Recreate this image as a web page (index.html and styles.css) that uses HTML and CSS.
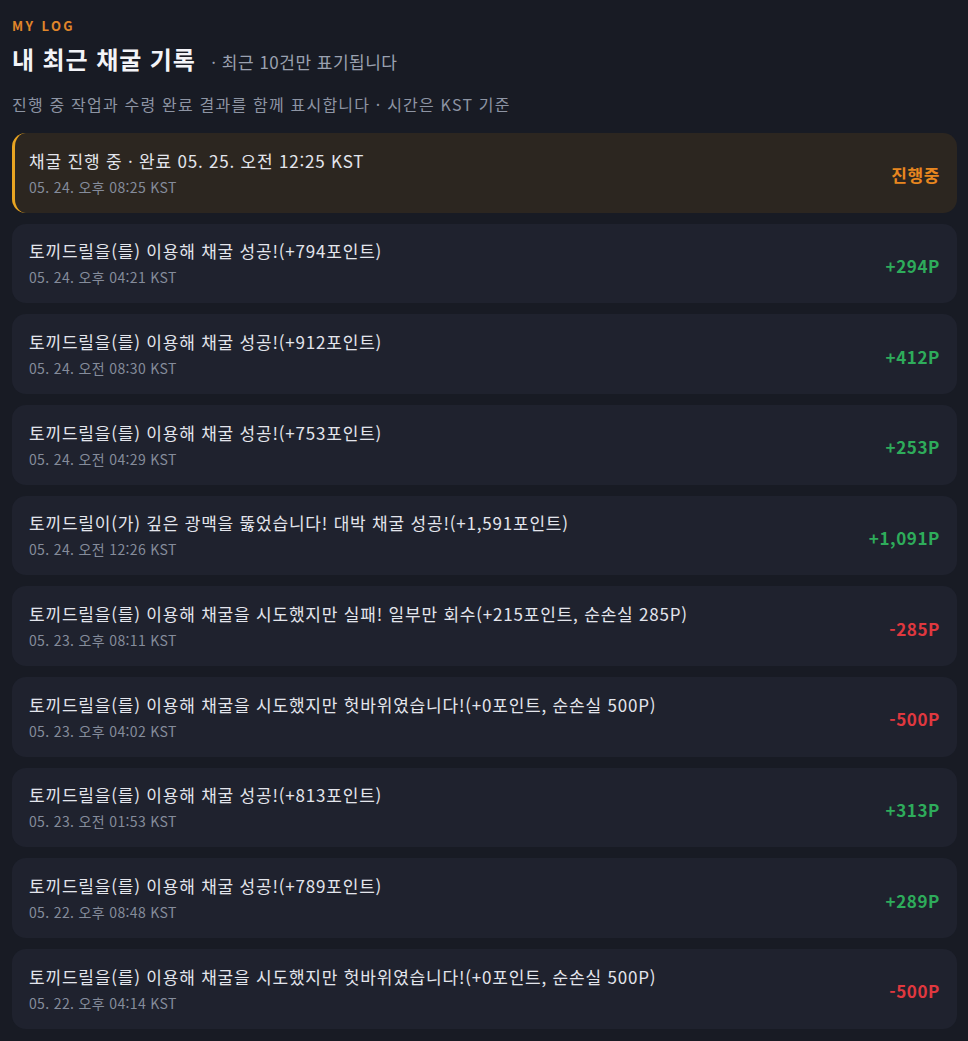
FILE: index.html
```html
<!DOCTYPE html>
<html lang="ko">
<head>
  <meta charset="UTF-8">
  <meta name="viewport" content="width=device-width, initial-scale=1.0">
  <title>My Log</title>
  <link rel="stylesheet" href="styles.css">
</head>
<body>
  <section class="log">
    <div class="eyebrow">MY LOG</div>
    <h1>내 최근 채굴 기록 <span class="sub">· 최근 10건만 표기됩니다</span></h1>
    <p class="desc">진행 중 작업과 수령 완료 결과를 함께 표시합니다 · 시간은 KST 기준</p>

    <ul class="list">
      <li class="item pending">
        <div class="info">
          <div class="title">채굴 진행 중 · 완료 05. 25. 오전 12:25 KST</div>
          <div class="time">05. 24. 오후 08:25 KST</div>
        </div>
        <div class="value wait">진행중</div>
      </li>
      <li class="item">
        <div class="info">
          <div class="title">토끼드릴을(를) 이용해 채굴 성공!(+794포인트)</div>
          <div class="time">05. 24. 오후 04:21 KST</div>
        </div>
        <div class="value plus">+294P</div>
      </li>
      <li class="item">
        <div class="info">
          <div class="title">토끼드릴을(를) 이용해 채굴 성공!(+912포인트)</div>
          <div class="time">05. 24. 오전 08:30 KST</div>
        </div>
        <div class="value plus">+412P</div>
      </li>
      <li class="item">
        <div class="info">
          <div class="title">토끼드릴을(를) 이용해 채굴 성공!(+753포인트)</div>
          <div class="time">05. 24. 오전 04:29 KST</div>
        </div>
        <div class="value plus">+253P</div>
      </li>
      <li class="item">
        <div class="info">
          <div class="title">토끼드릴이(가) 깊은 광맥을 뚫었습니다! 대박 채굴 성공!(+1,591포인트)</div>
          <div class="time">05. 24. 오전 12:26 KST</div>
        </div>
        <div class="value plus">+1,091P</div>
      </li>
      <li class="item">
        <div class="info">
          <div class="title">토끼드릴을(를) 이용해 채굴을 시도했지만 실패! 일부만 회수(+215포인트, 순손실 285P)</div>
          <div class="time">05. 23. 오후 08:11 KST</div>
        </div>
        <div class="value minus">-285P</div>
      </li>
      <li class="item">
        <div class="info">
          <div class="title">토끼드릴을(를) 이용해 채굴을 시도했지만 헛바위였습니다!(+0포인트, 순손실 500P)</div>
          <div class="time">05. 23. 오후 04:02 KST</div>
        </div>
        <div class="value minus">-500P</div>
      </li>
      <li class="item">
        <div class="info">
          <div class="title">토끼드릴을(를) 이용해 채굴 성공!(+813포인트)</div>
          <div class="time">05. 23. 오전 01:53 KST</div>
        </div>
        <div class="value plus">+313P</div>
      </li>
      <li class="item">
        <div class="info">
          <div class="title">토끼드릴을(를) 이용해 채굴 성공!(+789포인트)</div>
          <div class="time">05. 22. 오후 08:48 KST</div>
        </div>
        <div class="value plus">+289P</div>
      </li>
      <li class="item">
        <div class="info">
          <div class="title">토끼드릴을(를) 이용해 채굴을 시도했지만 헛바위였습니다!(+0포인트, 순손실 500P)</div>
          <div class="time">05. 22. 오후 04:14 KST</div>
        </div>
        <div class="value minus">-500P</div>
      </li>
    </ul>
  </section>
</body>
</html>
```

FILE: styles.css
```css
* {
  margin: 0;
  padding: 0;
  box-sizing: border-box;
}
body {
  font-family: "Noto Sans CJK KR", "Noto Sans", sans-serif;
  background: #181b24;
  color: #e6e8ee;
  overflow: hidden;
}
.log {
  padding: 16px 11px 12px 12px;
}
.eyebrow {
  color: #e0862a;
  font-size: 13px;
  font-weight: 700;
  letter-spacing: 2.4px;
  line-height: 20px;
}
h1 {
  margin-top: 7px;
  font-size: 24px;
  font-weight: 700;
  line-height: 32px;
  letter-spacing: 0.9px;
  color: #f3f4f8;
}
h1 .sub {
  margin-left: 8px;
  font-size: 17px;
  font-weight: 400;
  letter-spacing: 0.5px;
  color: #9aa1b0;
}
.desc {
  margin-top: 14px;
  font-size: 16px;
  line-height: 24px;
  letter-spacing: 1.2px;
  color: #8d94a3;
}
.list {
  list-style: none;
  margin-top: 17px;
  display: flex;
  flex-direction: column;
  gap: 11px;
}
.item {
  display: flex;
  align-items: center;
  justify-content: space-between;
  height: 79.67px;
  padding: 0 17px;
  background: #1f222e;
  border-radius: 14px;
}
.item.pending {
  background: #2c2620;
  border-left: 3px solid #e8a422;
  padding-left: 14px;
}
.title {
  font-size: 17px;
  line-height: 24px;
  letter-spacing: 0.8px;
  color: #e3e5ec;
}
.time {
  margin-top: 4px;
  font-size: 14px;
  line-height: 20px;
  letter-spacing: 0.35px;
  color: #858c9b;
}
.value {
  font-size: 17px;
  font-weight: 700;
  letter-spacing: 0.6px;
  padding-top: 4px;
}
.value.wait { color: #e8861f; }
.value.plus { color: #2eac5b; }
.value.minus { color: #e0383f; }
```
